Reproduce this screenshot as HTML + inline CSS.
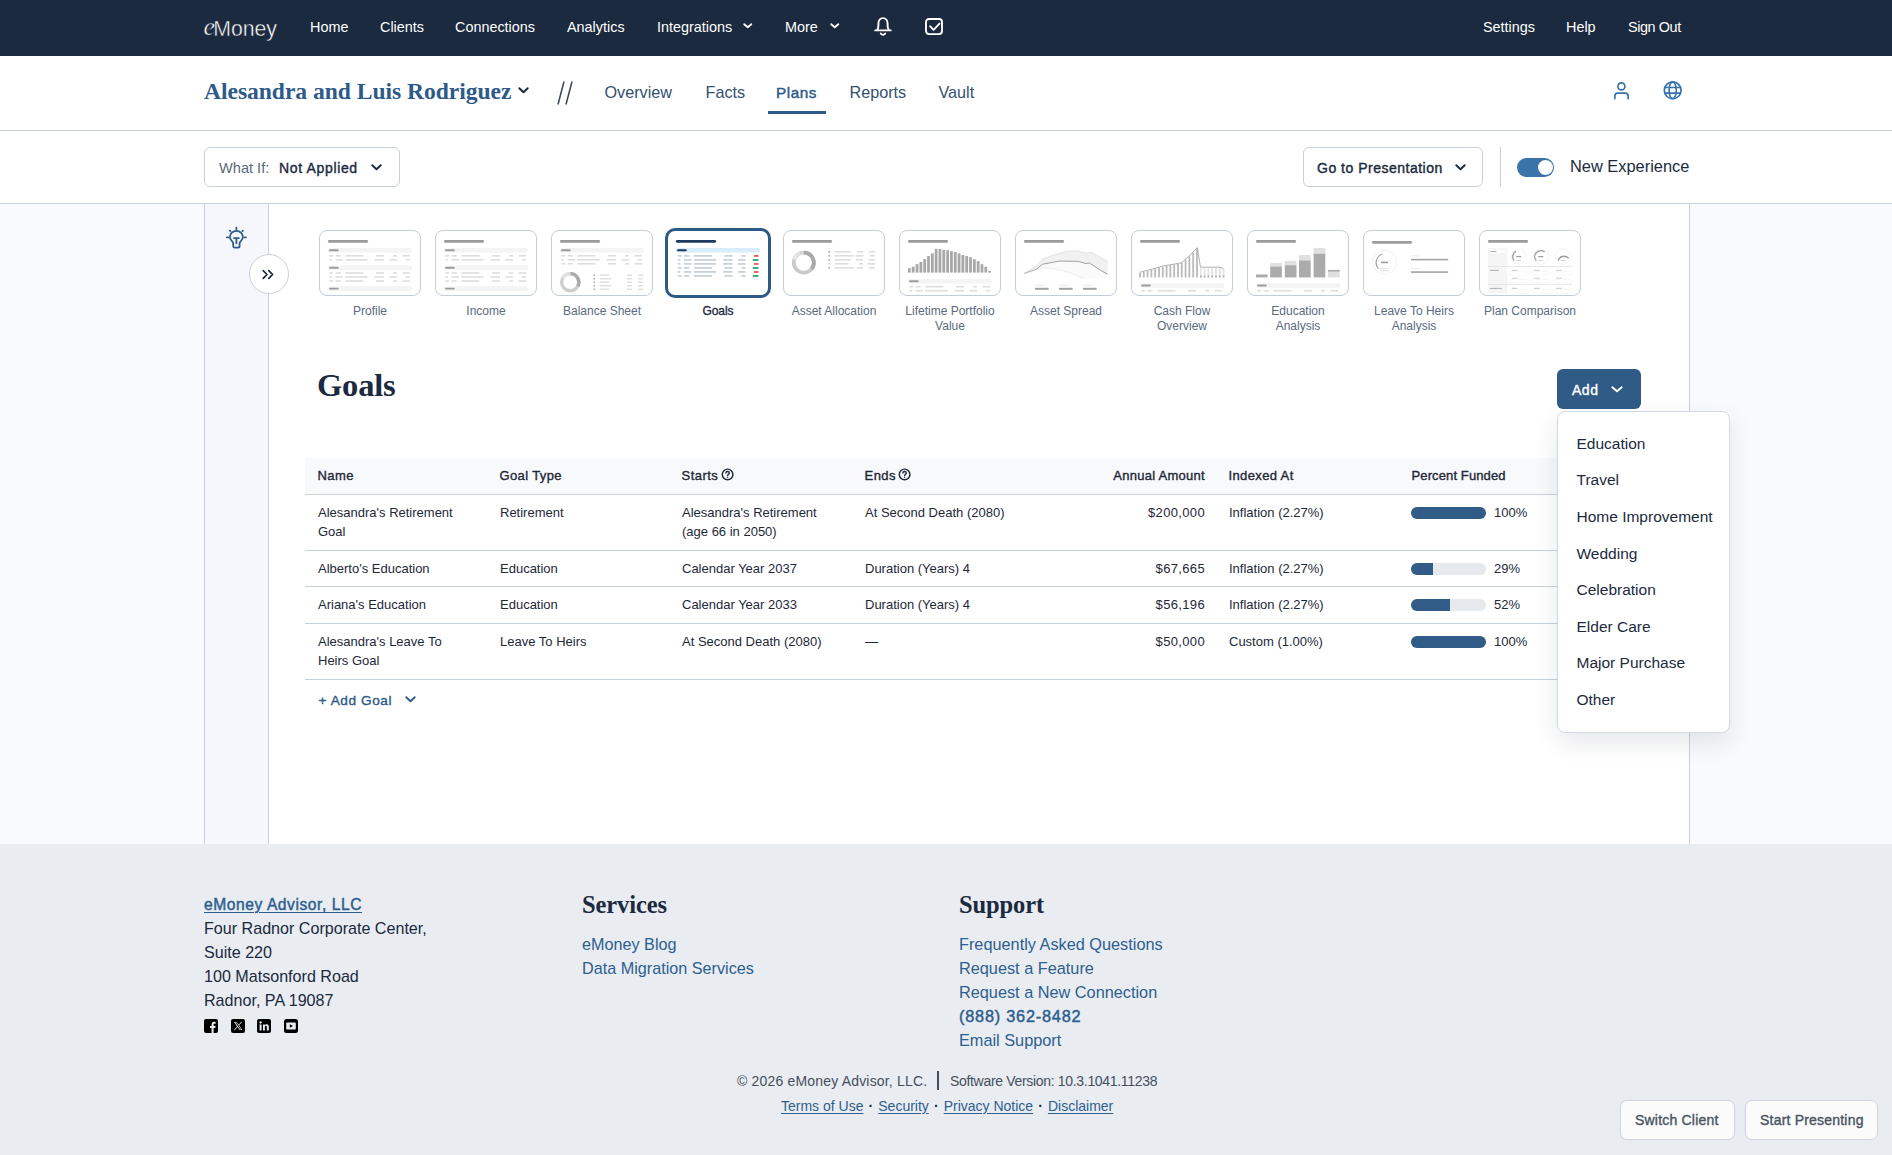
<!DOCTYPE html>
<html><head><meta charset="utf-8"><title>Goals</title>
<style>
html,body{margin:0;padding:0;}
body{width:1892px;height:1155px;position:relative;overflow:hidden;font-family:"Liberation Sans",sans-serif;background:#fff;}
.a{position:absolute;white-space:nowrap;box-sizing:content-box;}
svg.a{overflow:visible;}
u{text-decoration-thickness:1px;}
.d{display:inline-block;width:14.8px;text-align:center;color:#1b2a3e;}
</style></head><body>
<div class="a" style="left:0px;top:0px;width:1892px;height:56px;background:#1b2a3e"></div>
<div class="a" style="left:0px;top:56px;width:1892px;height:74px;background:#fff"></div>
<div class="a" style="left:0px;top:130px;width:1892px;height:1px;background:#c8d0dc"></div>
<div class="a" style="left:0px;top:131px;width:1892px;height:72px;background:#fff"></div>
<div class="a" style="left:0px;top:203px;width:1892px;height:1px;background:#c8d0dc"></div>
<div class="a" style="left:0px;top:204px;width:1892px;height:640px;background:#f9fafd"></div>
<div class="a" style="left:204px;top:204px;width:1px;height:640px;background:#c8d0dc"></div>
<div class="a" style="left:205px;top:204px;width:63px;height:640px;background:#f6f7fc"></div>
<div class="a" style="left:268px;top:204px;width:1px;height:640px;background:#c8d0dc"></div>
<div class="a" style="left:269px;top:204px;width:1420px;height:640px;background:#fff"></div>
<div class="a" style="left:1689px;top:204px;width:1px;height:640px;background:#c8d0dc"></div>
<div class="a" style="left:0px;top:844px;width:1892px;height:311px;background:#e9ecf1"></div>
<div class="a" style="left:203.5px;top:10.4px;font-family:'Liberation Serif',serif;font-style:italic;font-size:26px;line-height:34px;color:#fff;-webkit-text-stroke:0.5px #1b2a3e;">e</div>
<div class="a" style="left:213.3px;top:15.70px;font-size:21.3px;line-height:26px;color:#fff;letter-spacing:-0.05px;-webkit-text-stroke:0.45px #1b2a3e;">Money</div>
<div class="a" style="left:310px;top:17.50px;font-size:14.4px;line-height:19px;color:#fff;">Home</div>
<div class="a" style="left:380px;top:17.50px;font-size:14.4px;line-height:19px;color:#fff;">Clients</div>
<div class="a" style="left:455px;top:17.50px;font-size:14.4px;line-height:19px;color:#fff;">Connections</div>
<div class="a" style="left:567px;top:17.50px;font-size:14.4px;line-height:19px;color:#fff;">Analytics</div>
<div class="a" style="left:657px;top:17.50px;font-size:14.4px;line-height:19px;color:#fff;">Integrations</div>
<div class="a" style="left:785px;top:17.50px;font-size:14.4px;line-height:19px;color:#fff;">More</div>
<svg class="a" style="left:743px;top:23px" width="9.5" height="5.5" viewBox="0 0 9.5 5.5"><path d="M1.2 1.2 L4.75 4.3 L8.299999999999999 1.2" fill="none" stroke="#fff" stroke-width="1.8" stroke-linecap="round" stroke-linejoin="round"/></svg>
<svg class="a" style="left:830px;top:23px" width="9.5" height="5.5" viewBox="0 0 9.5 5.5"><path d="M1.2 1.2 L4.75 4.3 L8.299999999999999 1.2" fill="none" stroke="#fff" stroke-width="1.8" stroke-linecap="round" stroke-linejoin="round"/></svg>
<svg class="a" style="left:873px;top:16px" width="20" height="22" viewBox="0 0 20 22"><g fill="none" stroke="#fff" stroke-width="1.9" stroke-linecap="round" stroke-linejoin="round"><path d="M4.4 13.6c.7-1.1 1-2.5 1-3.9V7.7c0-3.2 2-5.6 4.6-5.6s4.6 2.4 4.6 5.6v2c0 1.4.3 2.8 1 3.9"/><path d="M2.2 14.4h15.6"/><path d="M7.8 17.6c.5.8 1.2 1.3 2.2 1.3s1.7-.5 2.2-1.3"/></g></svg>
<svg class="a" style="left:925px;top:18px" width="19" height="18" viewBox="0 0 19 18"><rect x="1" y="1" width="16" height="15.1" rx="3" fill="none" stroke="#fff" stroke-width="1.9"/><path d="M5.2 8.3l3.4 3.5l5.9-6.2" fill="none" stroke="#fff" stroke-width="1.9" stroke-linecap="round" stroke-linejoin="round"/></svg>
<div class="a" style="left:1483px;top:17.50px;font-size:14.4px;line-height:19px;color:#fff;">Settings</div>
<div class="a" style="left:1566px;top:17.50px;font-size:14.4px;line-height:19px;color:#fff;">Help</div>
<div class="a" style="left:1628px;top:17.50px;font-size:14.4px;line-height:19px;color:#fff;letter-spacing:-0.4px;">Sign Out</div>
<div class="a" style="left:204px;top:76.50px;font-size:23.6px;line-height:29px;color:#2d5a88;font-weight:700;font-family:'Liberation Serif', serif;letter-spacing:-0.05px;">Alesandra and Luis Rodriguez</div>
<svg class="a" style="left:518px;top:87px" width="11" height="6.5" viewBox="0 0 11 6.5"><path d="M1.3 1.3 L5.5 5.2 L9.7 1.3" fill="none" stroke="#1b2a3e" stroke-width="2" stroke-linecap="round" stroke-linejoin="round"/></svg>
<svg class="a" style="left:556px;top:80px" width="18" height="26" viewBox="0 0 18 26"><path d="M8 1.5L2 24.5M16 1.5L10 24.5" stroke="#3a4656" stroke-width="1.5" fill="none"/></svg>
<div class="a" style="left:604.5px;top:81.90px;font-size:16.2px;line-height:21px;color:#34506f;">Overview</div>
<div class="a" style="left:705.5px;top:81.90px;font-size:16.2px;line-height:21px;color:#34506f;">Facts</div>
<div class="a" style="left:776px;top:82.90px;font-size:15.3px;line-height:20px;color:#2d5a88;letter-spacing:0.551px;-webkit-text-stroke:0.43px #2d5a88;">Plans</div>
<div class="a" style="left:849.5px;top:81.90px;font-size:16.2px;line-height:21px;color:#34506f;">Reports</div>
<div class="a" style="left:938.5px;top:81.90px;font-size:16.2px;line-height:21px;color:#34506f;">Vault</div>
<div class="a" style="left:768px;top:111px;width:58px;height:3px;background:#2d5a88"></div>
<svg class="a" style="left:1611px;top:79px" width="22" height="22" viewBox="0 0 22 22"><circle cx="10.4" cy="7.4" r="3.5" fill="none" stroke="#3573ad" stroke-width="1.7"/><path d="M3.85 19.6v-2.6c0-1.6 1.3-2.95 2.95-2.95h7.4c1.6 0 2.95 1.3 2.95 2.95v2.6" fill="none" stroke="#3573ad" stroke-width="1.7" stroke-linecap="round"/></svg>
<svg class="a" style="left:1662px;top:80px" width="22" height="22" viewBox="0 0 22 22"><circle cx="10.7" cy="10.3" r="8.4" fill="none" stroke="#3573ad" stroke-width="1.7"/><ellipse cx="10.7" cy="10.3" rx="3.6" ry="8.4" fill="none" stroke="#3573ad" stroke-width="1.6"/><path d="M2.6 7.5h16.2M2.6 13.1h16.2" stroke="#3573ad" stroke-width="1.6"/></svg>
<div class="a" style="left:204px;top:147px;width:194px;height:38px;border:1px solid #c8d0dc;border-radius:6px;background:#fff"></div>
<div class="a" style="left:219px;top:158.90px;font-size:14.6px;line-height:19px;color:#5b6a7c;">What If:</div>
<div class="a" style="left:279px;top:158.70px;font-size:14px;line-height:18px;color:#1b2a3e;letter-spacing:0.654px;-webkit-text-stroke:0.39px #1b2a3e;">Not Applied</div>
<svg class="a" style="left:371px;top:164px" width="11" height="6.5" viewBox="0 0 11 6.5"><path d="M1.25 1.25 L5.5 5.25 L9.75 1.25" fill="none" stroke="#1b2a3e" stroke-width="1.9" stroke-linecap="round" stroke-linejoin="round"/></svg>
<div class="a" style="left:1303px;top:147px;width:178px;height:38px;border:1px solid #c8d0dc;border-radius:6px;background:#fff"></div>
<div class="a" style="left:1317px;top:158.50px;font-size:14px;line-height:18px;color:#1b2a3e;letter-spacing:0.504px;-webkit-text-stroke:0.39px #1b2a3e;">Go to Presentation</div>
<svg class="a" style="left:1455px;top:164px" width="11" height="6.5" viewBox="0 0 11 6.5"><path d="M1.25 1.25 L5.5 5.25 L9.75 1.25" fill="none" stroke="#1b2a3e" stroke-width="1.9" stroke-linecap="round" stroke-linejoin="round"/></svg>
<div class="a" style="left:1500px;top:147px;width:1px;height:40px;background:#c8d0dc"></div>
<div class="a" style="left:1517px;top:158px;width:37px;height:19px;background:#3a73a9;border-radius:10px"></div>
<div class="a" style="left:1538px;top:160px;width:15px;height:15px;background:#fff;border-radius:50%"></div>
<div class="a" style="left:1570px;top:155.60px;font-size:16.4px;line-height:21px;color:#1b2a3e;">New Experience</div>
<svg class="a" style="left:225px;top:226px" width="23" height="23" viewBox="0 0 23 23"><g stroke="#2d5a88" stroke-width="1.8" stroke-linecap="round" fill="none"><path d="M11.4 1.6v1.6M4.9 4.6l.5.5M17.9 4.6l-.5.5M1.9 11.3h1.3M19.6 11.3h1.3"/><path d="M8.2 17.2c0-1.8-3.3-2.6-3.3-6.1c0-3.6 2.9-6.3 6.5-6.3s6.5 2.7 6.5 6.3c0 3.5-3.3 4.3-3.3 6.1v2.8c0 .9-.7 1.6-1.6 1.6h-3.2c-.9 0-1.6-.7-1.6-1.6z"/><path d="M9 12.1h4.8M11.4 12.1v5.2"/></g></svg>
<div class="a" style="left:249px;top:254px;width:38px;height:38px;border:1px solid #c8d0dc;border-radius:50%;background:#fff"></div>
<svg class="a" style="left:261px;top:269px" width="14" height="11" viewBox="0 0 14 11"><path d="M2.2 1.6l3.8 3.9l-3.8 3.9M7.8 1.6l3.8 3.9l-3.8 3.9" fill="none" stroke="#1b2a3e" stroke-width="1.7" stroke-linecap="round" stroke-linejoin="round"/></svg>
<div class="a" style="left:319px;top:230px;width:100px;height:64px;border:1px solid #c3ccdb;border-radius:8px;background:#fff"></div>
<svg class="a" style="left:319px;top:230px" width="102" height="66" viewBox="0 0 102 66"><line x1="10.3" y1="11.3" x2="47.7" y2="11.3" stroke="#9b9b9b" stroke-width="2.7" stroke-linecap="round"/><rect x="9" y="18" width="84" height="4.6" rx="1.5" fill="#f4f4f4"/><line x1="11" y1="20.3" x2="18.8" y2="20.3" stroke="#9b9b9b" stroke-width="1.9" stroke-linecap="round"/><rect x="10.3" y="25.0" width="3.799999999999999" height="1.6" fill="#dedede"/><rect x="16.5" y="25.0" width="5.300000000000001" height="1.6" fill="#dedede"/><rect x="26.4" y="25.0" width="18.1" height="1.6" fill="#dedede"/><rect x="57" y="25.0" width="8" height="1.6" fill="#dedede"/><rect x="74" y="25.0" width="4" height="1.6" fill="#dedede"/><rect x="83.6" y="25.0" width="7.400000000000006" height="1.6" fill="#dedede"/><rect x="10.3" y="29.0" width="2.5" height="1.6" fill="#dedede"/><rect x="16.5" y="29.0" width="7.5" height="1.6" fill="#dedede"/><rect x="26.4" y="29.0" width="22.200000000000003" height="1.6" fill="#dedede"/><rect x="55.7" y="29.0" width="9.299999999999997" height="1.6" fill="#dedede"/><rect x="70.5" y="29.0" width="7.5" height="1.6" fill="#dedede"/><rect x="86.8" y="29.0" width="4.200000000000003" height="1.6" fill="#dedede"/><rect x="9" y="35.5" width="84" height="4.6" rx="1.5" fill="#f4f4f4"/><line x1="11" y1="37.8" x2="18.8" y2="37.8" stroke="#9b9b9b" stroke-width="1.9" stroke-linecap="round"/><rect x="10.3" y="42.2" width="3.799999999999999" height="1.6" fill="#dedede"/><rect x="16.5" y="42.2" width="5.300000000000001" height="1.6" fill="#dedede"/><rect x="26.4" y="42.2" width="18.1" height="1.6" fill="#dedede"/><rect x="57" y="42.2" width="8" height="1.6" fill="#dedede"/><rect x="74" y="42.2" width="4" height="1.6" fill="#dedede"/><rect x="83.6" y="42.2" width="7.400000000000006" height="1.6" fill="#dedede"/><rect x="10.3" y="46.2" width="2.5" height="1.6" fill="#dedede"/><rect x="16.5" y="46.2" width="7.5" height="1.6" fill="#dedede"/><rect x="26.4" y="46.2" width="22.200000000000003" height="1.6" fill="#dedede"/><rect x="55.7" y="46.2" width="9.299999999999997" height="1.6" fill="#dedede"/><rect x="70.5" y="46.2" width="7.5" height="1.6" fill="#dedede"/><rect x="86.8" y="46.2" width="4.200000000000003" height="1.6" fill="#dedede"/><rect x="10.3" y="50.2" width="3.799999999999999" height="1.6" fill="#dedede"/><rect x="16.5" y="50.2" width="5.300000000000001" height="1.6" fill="#dedede"/><rect x="26.4" y="50.2" width="18.1" height="1.6" fill="#dedede"/><rect x="57" y="50.2" width="8" height="1.6" fill="#dedede"/><rect x="74" y="50.2" width="4" height="1.6" fill="#dedede"/><rect x="83.6" y="50.2" width="7.400000000000006" height="1.6" fill="#dedede"/><rect x="9" y="56.3" width="84" height="4.6" rx="1.5" fill="#f4f4f4"/><line x1="11" y1="58.599999999999994" x2="18.8" y2="58.599999999999994" stroke="#9b9b9b" stroke-width="1.9" stroke-linecap="round"/></svg>
<div class="a" style="left:312.0px;width:116px;text-align:center;top:302.80px;font-size:12px;line-height:16px;color:#5a6a80;">Profile</div>
<div class="a" style="left:435px;top:230px;width:100px;height:64px;border:1px solid #c3ccdb;border-radius:8px;background:#fff"></div>
<svg class="a" style="left:435px;top:230px" width="102" height="66" viewBox="0 0 102 66"><line x1="10.3" y1="11.3" x2="47.7" y2="11.3" stroke="#9b9b9b" stroke-width="2.7" stroke-linecap="round"/><rect x="9" y="18" width="84" height="4.6" rx="1.5" fill="#f4f4f4"/><line x1="11" y1="20.3" x2="18.8" y2="20.3" stroke="#9b9b9b" stroke-width="1.9" stroke-linecap="round"/><rect x="10.3" y="25.0" width="3.799999999999999" height="1.6" fill="#dedede"/><rect x="16.5" y="25.0" width="5.300000000000001" height="1.6" fill="#dedede"/><rect x="26.4" y="25.0" width="18.1" height="1.6" fill="#dedede"/><rect x="57" y="25.0" width="8" height="1.6" fill="#dedede"/><rect x="74" y="25.0" width="4" height="1.6" fill="#dedede"/><rect x="83.6" y="25.0" width="7.400000000000006" height="1.6" fill="#dedede"/><rect x="10.3" y="29.0" width="2.5" height="1.6" fill="#dedede"/><rect x="16.5" y="29.0" width="7.5" height="1.6" fill="#dedede"/><rect x="26.4" y="29.0" width="22.200000000000003" height="1.6" fill="#dedede"/><rect x="55.7" y="29.0" width="9.299999999999997" height="1.6" fill="#dedede"/><rect x="70.5" y="29.0" width="7.5" height="1.6" fill="#dedede"/><rect x="86.8" y="29.0" width="4.200000000000003" height="1.6" fill="#dedede"/><rect x="9" y="35.5" width="84" height="4.6" rx="1.5" fill="#f4f4f4"/><line x1="11" y1="37.8" x2="18.8" y2="37.8" stroke="#9b9b9b" stroke-width="1.9" stroke-linecap="round"/><rect x="10.3" y="42.2" width="3.799999999999999" height="1.6" fill="#dedede"/><rect x="16.5" y="42.2" width="5.300000000000001" height="1.6" fill="#dedede"/><rect x="26.4" y="42.2" width="18.1" height="1.6" fill="#dedede"/><rect x="57" y="42.2" width="8" height="1.6" fill="#dedede"/><rect x="74" y="42.2" width="4" height="1.6" fill="#dedede"/><rect x="83.6" y="42.2" width="7.400000000000006" height="1.6" fill="#dedede"/><rect x="10.3" y="46.2" width="2.5" height="1.6" fill="#dedede"/><rect x="16.5" y="46.2" width="7.5" height="1.6" fill="#dedede"/><rect x="26.4" y="46.2" width="22.200000000000003" height="1.6" fill="#dedede"/><rect x="55.7" y="46.2" width="9.299999999999997" height="1.6" fill="#dedede"/><rect x="70.5" y="46.2" width="7.5" height="1.6" fill="#dedede"/><rect x="86.8" y="46.2" width="4.200000000000003" height="1.6" fill="#dedede"/><rect x="10.3" y="50.2" width="3.799999999999999" height="1.6" fill="#dedede"/><rect x="16.5" y="50.2" width="5.300000000000001" height="1.6" fill="#dedede"/><rect x="26.4" y="50.2" width="18.1" height="1.6" fill="#dedede"/><rect x="57" y="50.2" width="8" height="1.6" fill="#dedede"/><rect x="74" y="50.2" width="4" height="1.6" fill="#dedede"/><rect x="83.6" y="50.2" width="7.400000000000006" height="1.6" fill="#dedede"/><rect x="9" y="56.3" width="84" height="4.6" rx="1.5" fill="#f4f4f4"/><line x1="11" y1="58.599999999999994" x2="18.8" y2="58.599999999999994" stroke="#9b9b9b" stroke-width="1.9" stroke-linecap="round"/></svg>
<div class="a" style="left:428.0px;width:116px;text-align:center;top:302.80px;font-size:12px;line-height:16px;color:#5a6a80;">Income</div>
<div class="a" style="left:551px;top:230px;width:100px;height:64px;border:1px solid #c3ccdb;border-radius:8px;background:#fff"></div>
<svg class="a" style="left:551px;top:230px" width="102" height="66" viewBox="0 0 102 66"><line x1="10.3" y1="11.3" x2="47.7" y2="11.3" stroke="#9b9b9b" stroke-width="2.7" stroke-linecap="round"/><rect x="9" y="18" width="84" height="4.6" rx="1.5" fill="#f4f4f4"/><line x1="11" y1="20.3" x2="18.8" y2="20.3" stroke="#9b9b9b" stroke-width="1.9" stroke-linecap="round"/><rect x="10.3" y="25.0" width="3.799999999999999" height="1.6" fill="#dedede"/><rect x="16.5" y="25.0" width="5.300000000000001" height="1.6" fill="#dedede"/><rect x="26.4" y="25.0" width="18.1" height="1.6" fill="#dedede"/><rect x="57" y="25.0" width="8" height="1.6" fill="#dedede"/><rect x="74" y="25.0" width="4" height="1.6" fill="#dedede"/><rect x="83.6" y="25.0" width="7.400000000000006" height="1.6" fill="#dedede"/><rect x="10.3" y="29.0" width="2.5" height="1.6" fill="#dedede"/><rect x="16.5" y="29.0" width="7.5" height="1.6" fill="#dedede"/><rect x="26.4" y="29.0" width="22.200000000000003" height="1.6" fill="#dedede"/><rect x="55.7" y="29.0" width="9.299999999999997" height="1.6" fill="#dedede"/><rect x="70.5" y="29.0" width="7.5" height="1.6" fill="#dedede"/><rect x="86.8" y="29.0" width="4.200000000000003" height="1.6" fill="#dedede"/><rect x="10.3" y="33.0" width="3.799999999999999" height="1.6" fill="#dedede"/><rect x="16.5" y="33.0" width="5.300000000000001" height="1.6" fill="#dedede"/><rect x="26.4" y="33.0" width="18.1" height="1.6" fill="#dedede"/><rect x="57" y="33.0" width="8" height="1.6" fill="#dedede"/><rect x="74" y="33.0" width="4" height="1.6" fill="#dedede"/><rect x="83.6" y="33.0" width="7.400000000000006" height="1.6" fill="#dedede"/><circle cx="19.2" cy="52.2" r="8.6" fill="none" stroke="#cfcfcf" stroke-width="3.4"/><path d="M19.2 43.6 A8.6 8.6 0 0 1 26.7 56.4" fill="none" stroke="#ababab" stroke-width="3.4"/><path d="M11.4 48.6 A8.6 8.6 0 0 1 19.2 43.6" fill="none" stroke="#e2e2e2" stroke-width="3.4"/><rect x="42.5" y="44.400000000000006" width="1.6" height="1.6" fill="#aaa"/><rect x="48.7" y="44.5" width="9.6" height="1.4" fill="#dedede"/><rect x="76" y="44.5" width="5" height="1.4" fill="#dedede"/><rect x="87" y="44.5" width="5" height="1.4" fill="#dedede"/><rect x="42.5" y="47.900000000000006" width="1.6" height="1.6" fill="#aaa"/><rect x="48.7" y="48.0" width="11.6" height="1.4" fill="#dedede"/><rect x="76" y="48.0" width="5" height="1.4" fill="#dedede"/><rect x="87" y="48.0" width="5" height="1.4" fill="#dedede"/><rect x="42.5" y="51.400000000000006" width="1.6" height="1.6" fill="#aaa"/><rect x="48.7" y="51.5" width="9.6" height="1.4" fill="#dedede"/><rect x="76" y="51.5" width="5" height="1.4" fill="#dedede"/><rect x="87" y="51.5" width="5" height="1.4" fill="#dedede"/><rect x="42.5" y="54.900000000000006" width="1.6" height="1.6" fill="#aaa"/><rect x="48.7" y="55.0" width="11.6" height="1.4" fill="#dedede"/><rect x="76" y="55.0" width="5" height="1.4" fill="#dedede"/><rect x="87" y="55.0" width="5" height="1.4" fill="#dedede"/><rect x="42.5" y="58.5" width="1.6" height="1.6" fill="#aaa"/><rect x="48.7" y="58.599999999999994" width="9.6" height="1.4" fill="#dedede"/><rect x="76" y="58.599999999999994" width="5" height="1.4" fill="#dedede"/><rect x="87" y="58.599999999999994" width="5" height="1.4" fill="#dedede"/></svg>
<div class="a" style="left:544.0px;width:116px;text-align:center;top:302.80px;font-size:12px;line-height:16px;color:#5a6a80;">Balance Sheet</div>
<div class="a" style="left:665px;top:228px;width:100px;height:64px;border:3px solid #2c5a86;border-radius:10px;background:#fff"></div>
<svg class="a" style="left:667px;top:230px" width="102" height="66" viewBox="0 0 102 66"><line x1="10.3" y1="11.3" x2="47.7" y2="11.3" stroke="#1d3a5c" stroke-width="2.7" stroke-linecap="round"/><rect x="9" y="18" width="84" height="4.6" rx="1.5" fill="#d8ecfb"/><line x1="11" y1="20.3" x2="18.8" y2="20.3" stroke="#1d3a5c" stroke-width="1.9" stroke-linecap="round"/><rect x="10.8" y="25.099999999999998" width="3.799999999999999" height="1.6" fill="#c3ccd9"/><rect x="17.0" y="25.099999999999998" width="5.300000000000001" height="1.6" fill="#c3ccd9"/><rect x="26.9" y="25.099999999999998" width="18.1" height="1.6" fill="#c3ccd9"/><rect x="57.5" y="25.099999999999998" width="8" height="1.6" fill="#c3ccd9"/><rect x="74.5" y="25.099999999999998" width="4" height="1.6" fill="#c3ccd9"/><rect x="87.1" y="25.099999999999998" width="4.3" height="1.7" fill="#e5483a"/><rect x="10.8" y="29.099999999999998" width="2.5" height="1.6" fill="#c3ccd9"/><rect x="17.0" y="29.099999999999998" width="7.5" height="1.6" fill="#c3ccd9"/><rect x="26.9" y="29.099999999999998" width="22.200000000000003" height="1.6" fill="#c3ccd9"/><rect x="56.2" y="29.099999999999998" width="9.299999999999997" height="1.6" fill="#c3ccd9"/><rect x="71.0" y="29.099999999999998" width="7.5" height="1.6" fill="#c3ccd9"/><rect x="85.8" y="29.099999999999998" width="5.6" height="1.7" fill="#20a05a"/><rect x="10.8" y="33.1" width="2.5" height="1.6" fill="#c3ccd9"/><rect x="17.0" y="33.1" width="7.5" height="1.6" fill="#c3ccd9"/><rect x="26.9" y="33.1" width="22.200000000000003" height="1.6" fill="#c3ccd9"/><rect x="56.2" y="33.1" width="9.299999999999997" height="1.6" fill="#c3ccd9"/><rect x="71.0" y="33.1" width="7.5" height="1.6" fill="#c3ccd9"/><rect x="87.1" y="33.1" width="4.3" height="1.7" fill="#e5483a"/><rect x="10.8" y="37.1" width="3.799999999999999" height="1.6" fill="#c3ccd9"/><rect x="17.0" y="37.1" width="5.300000000000001" height="1.6" fill="#c3ccd9"/><rect x="26.9" y="37.1" width="18.1" height="1.6" fill="#c3ccd9"/><rect x="57.5" y="37.1" width="8" height="1.6" fill="#c3ccd9"/><rect x="74.5" y="37.1" width="4" height="1.6" fill="#c3ccd9"/><rect x="85.8" y="37.1" width="5.6" height="1.7" fill="#20a05a"/><rect x="10.8" y="41.1" width="2.5" height="1.6" fill="#c3ccd9"/><rect x="17.0" y="41.1" width="7.5" height="1.6" fill="#c3ccd9"/><rect x="26.9" y="41.1" width="22.200000000000003" height="1.6" fill="#c3ccd9"/><rect x="56.2" y="41.1" width="9.299999999999997" height="1.6" fill="#c3ccd9"/><rect x="71.0" y="41.1" width="7.5" height="1.6" fill="#c3ccd9"/><rect x="87.1" y="41.1" width="4.3" height="1.7" fill="#e5483a"/><rect x="10.8" y="45.1" width="3.799999999999999" height="1.6" fill="#c3ccd9"/><rect x="17.0" y="45.1" width="5.300000000000001" height="1.6" fill="#c3ccd9"/><rect x="26.9" y="45.1" width="18.1" height="1.6" fill="#c3ccd9"/><rect x="57.5" y="45.1" width="8" height="1.6" fill="#c3ccd9"/><rect x="74.5" y="45.1" width="4" height="1.6" fill="#c3ccd9"/><rect x="85.8" y="45.1" width="5.6" height="1.7" fill="#20a05a"/></svg>
<div class="a" style="left:660.0px;width:116px;text-align:center;top:302.80px;font-size:12px;line-height:16px;color:#1b2a3e;letter-spacing:-0.068px;-webkit-text-stroke:0.34px #1b2a3e;">Goals</div>
<div class="a" style="left:783px;top:230px;width:100px;height:64px;border:1px solid #c3ccdb;border-radius:8px;background:#fff"></div>
<svg class="a" style="left:783px;top:230px" width="102" height="66" viewBox="0 0 102 66"><line x1="10.3" y1="11.3" x2="47.7" y2="11.3" stroke="#9b9b9b" stroke-width="2.7" stroke-linecap="round"/><circle cx="20.8" cy="32.7" r="10" fill="none" stroke="#cacaca" stroke-width="3.8"/><path d="M20.8 22.7 A10 10 0 0 1 28.5 39.1" fill="none" stroke="#a9a9a9" stroke-width="3.8"/><path d="M11.3 29.6 A10 10 0 0 1 17.5 23.3" fill="none" stroke="#e4e4e4" stroke-width="3.8"/><path d="M17.5 23.3 A10 10 0 0 1 20.8 22.7" fill="none" stroke="#d6d6d6" stroke-width="3.8"/><rect x="45.4" y="21.0" width="1.6" height="1.6" fill="#999"/><rect x="51.6" y="21.0" width="16" height="1.6" fill="#dedede"/><rect x="74" y="21.0" width="6" height="1.6" fill="#dedede"/><rect x="85.5" y="21.0" width="6.7" height="1.6" fill="#dedede"/><rect x="45.4" y="25.0" width="1.6" height="1.6" fill="#aaa"/><rect x="51.6" y="25.0" width="19.2" height="1.6" fill="#dedede"/><rect x="72.5" y="25.0" width="8" height="1.6" fill="#dedede"/><rect x="86.5" y="25.0" width="5.7" height="1.6" fill="#dedede"/><rect x="45.4" y="29.0" width="1.6" height="1.6" fill="#aaa"/><rect x="51.6" y="29.0" width="16" height="1.6" fill="#dedede"/><rect x="73" y="29.0" width="7" height="1.6" fill="#dedede"/><rect x="85.5" y="29.0" width="6.7" height="1.6" fill="#dedede"/><rect x="45.4" y="33.0" width="1.6" height="1.6" fill="#ddd"/><rect x="51.6" y="33.0" width="14" height="1.6" fill="#dedede"/><rect x="76" y="33.0" width="4" height="1.6" fill="#dedede"/><rect x="84.5" y="33.0" width="7.7" height="1.6" fill="#dedede"/><rect x="45.4" y="37.0" width="1.6" height="1.6" fill="#aaa"/><rect x="51.6" y="37.0" width="19.2" height="1.6" fill="#dedede"/><rect x="74" y="37.0" width="6" height="1.6" fill="#dedede"/><rect x="85.5" y="37.0" width="6.7" height="1.6" fill="#dedede"/></svg>
<div class="a" style="left:776.0px;width:116px;text-align:center;top:302.80px;font-size:12px;line-height:16px;color:#5a6a80;">Asset Allocation</div>
<div class="a" style="left:899px;top:230px;width:100px;height:64px;border:1px solid #c3ccdb;border-radius:8px;background:#fff"></div>
<svg class="a" style="left:899px;top:230px" width="102" height="66" viewBox="0 0 102 66"><line x1="10.3" y1="11.3" x2="47.7" y2="11.3" stroke="#9b9b9b" stroke-width="2.7" stroke-linecap="round"/><rect x="9.0" y="38.116591928251125" width="2.8" height="4.483408071748876" fill="#a8a8a8"/><rect x="12.82" y="36.70723894939142" width="2.8" height="5.892761050608584" fill="#a8a8a8"/><rect x="16.64" y="34.14477898782832" width="2.8" height="8.455221012171684" fill="#a8a8a8"/><rect x="20.46" y="32.03074951953876" width="2.8" height="10.569250480461243" fill="#a8a8a8"/><rect x="24.28" y="29.019859064702114" width="2.8" height="13.580140935297887" fill="#a8a8a8"/><rect x="28.099999999999998" y="26.07303010890455" width="2.8" height="16.52696989109545" fill="#a8a8a8"/><rect x="31.919999999999998" y="23.382447149263292" width="2.8" height="19.21755285073671" fill="#a8a8a8"/><rect x="35.739999999999995" y="18.898142216527866" width="2.8" height="23.701857783472136" fill="#a8a8a8"/><rect x="39.56" y="18.898142216527866" width="2.8" height="23.701857783472136" fill="#a8a8a8"/><rect x="43.379999999999995" y="19.85906470211403" width="2.8" height="22.740935297885972" fill="#a8a8a8"/><rect x="47.199999999999996" y="20.17937219730942" width="2.8" height="22.420627802690582" fill="#a8a8a8"/><rect x="51.019999999999996" y="21.14029468289558" width="2.8" height="21.459705317104422" fill="#a8a8a8"/><rect x="54.839999999999996" y="21.973094170403588" width="2.8" height="20.626905829596414" fill="#a8a8a8"/><rect x="58.66" y="23.382447149263292" width="2.8" height="19.21755285073671" fill="#a8a8a8"/><rect x="62.48" y="24.983984625240232" width="2.8" height="17.61601537475977" fill="#a8a8a8"/><rect x="66.3" y="26.07303010890455" width="2.8" height="16.52696989109545" fill="#a8a8a8"/><rect x="70.12" y="27.226137091607946" width="2.8" height="15.373862908392056" fill="#a8a8a8"/><rect x="73.94" y="29.276105060858423" width="2.8" height="13.323894939141578" fill="#a8a8a8"/><rect x="77.75999999999999" y="31.069827033952595" width="2.8" height="11.530172966047406" fill="#a8a8a8"/><rect x="81.58" y="34.14477898782832" width="2.8" height="8.455221012171684" fill="#a8a8a8"/><rect x="85.39999999999999" y="36.70723894939142" width="2.8" height="5.892761050608584" fill="#a8a8a8"/><rect x="89.22" y="40.99935938500961" width="2.8" height="1.6006406149903896" fill="#a8a8a8"/><rect x="9" y="49" width="84" height="4.6" rx="1.5" fill="#f4f4f4"/><line x1="11" y1="51.3" x2="18.8" y2="51.3" stroke="#9b9b9b" stroke-width="1.9" stroke-linecap="round"/><rect x="10.3" y="55.900000000000006" width="3.799999999999999" height="1.6" fill="#dedede"/><rect x="16.5" y="55.900000000000006" width="5.300000000000001" height="1.6" fill="#dedede"/><rect x="26.4" y="55.900000000000006" width="18.1" height="1.6" fill="#dedede"/><rect x="57" y="55.900000000000006" width="8" height="1.6" fill="#dedede"/><rect x="74" y="55.900000000000006" width="4" height="1.6" fill="#dedede"/><rect x="83.6" y="55.900000000000006" width="7.400000000000006" height="1.6" fill="#dedede"/><rect x="10.3" y="59.900000000000006" width="2.5" height="1.6" fill="#dedede"/><rect x="16.5" y="59.900000000000006" width="7.5" height="1.6" fill="#dedede"/><rect x="26.4" y="59.900000000000006" width="22.200000000000003" height="1.6" fill="#dedede"/><rect x="55.7" y="59.900000000000006" width="9.299999999999997" height="1.6" fill="#dedede"/><rect x="70.5" y="59.900000000000006" width="7.5" height="1.6" fill="#dedede"/><rect x="86.8" y="59.900000000000006" width="4.200000000000003" height="1.6" fill="#dedede"/></svg>
<div class="a" style="left:892.0px;width:116px;text-align:center;top:302.80px;font-size:12px;line-height:16px;color:#5a6a80;">Lifetime Portfolio</div>
<div class="a" style="left:892.0px;width:116px;text-align:center;top:317.80px;font-size:12px;line-height:16px;color:#5a6a80;">Value</div>
<div class="a" style="left:1015px;top:230px;width:100px;height:64px;border:1px solid #c3ccdb;border-radius:8px;background:#fff"></div>
<svg class="a" style="left:1015px;top:230px" width="102" height="66" viewBox="0 0 102 66"><line x1="10.3" y1="11.3" x2="47.7" y2="11.3" stroke="#9b9b9b" stroke-width="2.7" stroke-linecap="round"/><polygon points="8.97,43.56 27.55,38.12 37.80,38.44 54.45,42.60 69.19,48.37 92.57,48.37 92.57,44.20 85.20,40.04 74.31,32.99 71.11,33.63 63.42,31.39 44.20,31.07 37.80,32.35 27.55,34.27 21.14,39.40 8.97,43.56" fill="#fafafa"/><polygon points="8.97,43.56 21.14,36.19 27.55,29.15 37.80,25.30 46.76,22.74 51.89,21.14 63.42,21.14 72.39,23.38 76.23,22.10 85.20,27.23 92.57,31.39 92.57,44.20 85.20,40.04 74.31,32.99 71.11,33.63 63.42,31.39 44.20,31.07 37.80,32.35 27.55,34.27 21.14,39.40 8.97,43.56" fill="#f1f1f1"/><polyline points="8.97,43.56 21.14,36.19 27.55,29.15 37.80,25.30 46.76,22.74 51.89,21.14 63.42,21.14 72.39,23.38 76.23,22.10 85.20,27.23 92.57,31.39" fill="none" stroke="#d4d4d4" stroke-width="0.6"/><polyline points="8.97,43.56 21.14,39.40 27.55,34.27 37.80,32.35 44.20,31.07 63.42,31.39 71.11,33.63 74.31,32.99 85.20,40.04 92.57,44.20" fill="none" stroke="#8a8a8a" stroke-width="0.8"/><polyline points="8.97,43.56 27.55,38.12 37.80,38.44 54.45,42.60 69.19,48.37" fill="none" stroke="#e0e0e0" stroke-width="0.6"/><rect x="19.9" y="54.9" width="9.6" height="0.8" fill="#e2e2e2"/><rect x="19.9" y="57.8" width="13.8" height="2" fill="#a3a3a3"/><rect x="43.9" y="54.9" width="9.6" height="0.8" fill="#e2e2e2"/><rect x="43.9" y="57.8" width="13.8" height="2" fill="#a3a3a3"/><rect x="67.9" y="54.9" width="9.6" height="0.8" fill="#e2e2e2"/><rect x="67.9" y="57.8" width="13.8" height="2" fill="#a3a3a3"/></svg>
<div class="a" style="left:1008.0px;width:116px;text-align:center;top:302.80px;font-size:12px;line-height:16px;color:#5a6a80;">Asset Spread</div>
<div class="a" style="left:1131px;top:230px;width:100px;height:64px;border:1px solid #c3ccdb;border-radius:8px;background:#fff"></div>
<svg class="a" style="left:1131px;top:230px" width="102" height="66" viewBox="0 0 102 66"><line x1="10.3" y1="11.3" x2="47.7" y2="11.3" stroke="#9b9b9b" stroke-width="2.7" stroke-linecap="round"/><rect x="8.07" y="42.78" width="1.8" height="4.62" fill="#bababa"/><rect x="11.87" y="41.78" width="1.8" height="5.62" fill="#bababa"/><rect x="15.67" y="40.78" width="1.8" height="6.62" fill="#bababa"/><rect x="19.47" y="39.78" width="1.8" height="7.62" fill="#bababa"/><rect x="23.27" y="38.74" width="1.8" height="8.66" fill="#bababa"/><rect x="27.07" y="37.68" width="1.8" height="9.72" fill="#bababa"/><rect x="30.87" y="36.63" width="1.8" height="10.77" fill="#bababa"/><rect x="34.67" y="35.89" width="1.8" height="11.51" fill="#bababa"/><rect x="38.47" y="35.26" width="1.8" height="12.14" fill="#bababa"/><rect x="42.27" y="34.62" width="1.8" height="12.78" fill="#bababa"/><rect x="46.07" y="33.99" width="1.8" height="13.41" fill="#bababa"/><rect x="49.87" y="32.81" width="1.8" height="14.59" fill="#bababa"/><rect x="53.67" y="29.60" width="1.8" height="17.80" fill="#bababa"/><rect x="57.47" y="26.37" width="1.8" height="21.03" fill="#bababa"/><rect x="61.27" y="22.42" width="1.8" height="24.98" fill="#bababa"/><rect x="65.07" y="18.47" width="1.8" height="28.93" fill="#bababa"/><rect x="68.87" y="37.66" width="1.8" height="9.74" fill="#e3e3e3"/><rect x="68.97" y="45.6" width="1.6" height="1.8" fill="#aaa"/><rect x="72.67" y="37.66" width="1.8" height="9.74" fill="#e3e3e3"/><rect x="72.77" y="45.6" width="1.6" height="1.8" fill="#aaa"/><rect x="76.47" y="37.66" width="1.8" height="9.74" fill="#e3e3e3"/><rect x="76.57" y="45.6" width="1.6" height="1.8" fill="#aaa"/><rect x="80.27" y="37.66" width="1.8" height="9.74" fill="#e3e3e3"/><rect x="80.37" y="45.6" width="1.6" height="1.8" fill="#aaa"/><rect x="84.07" y="37.66" width="1.8" height="9.74" fill="#e3e3e3"/><rect x="84.17" y="45.6" width="1.6" height="1.8" fill="#aaa"/><rect x="87.87" y="37.92" width="1.8" height="9.48" fill="#e3e3e3"/><rect x="87.97" y="45.6" width="1.6" height="1.8" fill="#aaa"/><rect x="91.67" y="38.94" width="1.8" height="8.46" fill="#e3e3e3"/><rect x="91.77" y="45.6" width="1.6" height="1.8" fill="#aaa"/><polyline points="8.97,42.28 21.14,39.08 32.67,35.87 49.97,32.99 58.30,25.94 66.30,17.62 69.51,37.16 87.76,37.16 92.57,38.44" fill="none" stroke="#9d9d9d" stroke-width="0.8"/><rect x="9" y="53.2" width="84" height="4.6" rx="1.5" fill="#f4f4f4"/><line x1="11" y1="55.5" x2="18.8" y2="55.5" stroke="#9b9b9b" stroke-width="1.9" stroke-linecap="round"/><rect x="10.3" y="59.900000000000006" width="3.799999999999999" height="1.6" fill="#dedede"/><rect x="16.5" y="59.900000000000006" width="5.300000000000001" height="1.6" fill="#dedede"/><rect x="26.4" y="59.900000000000006" width="18.1" height="1.6" fill="#dedede"/><rect x="57" y="59.900000000000006" width="8" height="1.6" fill="#dedede"/><rect x="74" y="59.900000000000006" width="4" height="1.6" fill="#dedede"/><rect x="83.6" y="59.900000000000006" width="7.400000000000006" height="1.6" fill="#dedede"/></svg>
<div class="a" style="left:1124.0px;width:116px;text-align:center;top:302.80px;font-size:12px;line-height:16px;color:#5a6a80;">Cash Flow</div>
<div class="a" style="left:1124.0px;width:116px;text-align:center;top:317.80px;font-size:12px;line-height:16px;color:#5a6a80;">Overview</div>
<div class="a" style="left:1247px;top:230px;width:100px;height:64px;border:1px solid #c3ccdb;border-radius:8px;background:#fff"></div>
<svg class="a" style="left:1247px;top:230px" width="102" height="66" viewBox="0 0 102 66"><line x1="10.3" y1="11.3" x2="47.7" y2="11.3" stroke="#9b9b9b" stroke-width="2.7" stroke-linecap="round"/><rect x="9" y="44.5" width="11.600000000000001" height="2.8999999999999986" fill="#ababab"/><rect x="23.2" y="32.9" width="11.7" height="3.6000000000000014" fill="#e0e0e0"/><rect x="23.2" y="36.5" width="11.7" height="10.899999999999999" fill="#ababab"/><rect x="37.8" y="30.9" width="11.700000000000003" height="4.300000000000004" fill="#e0e0e0"/><rect x="37.8" y="35.2" width="11.700000000000003" height="12.199999999999996" fill="#ababab"/><rect x="52" y="25" width="11.700000000000003" height="5.399999999999999" fill="#e0e0e0"/><rect x="52" y="30.4" width="11.700000000000003" height="17.0" fill="#ababab"/><rect x="66.6" y="17.9" width="11.700000000000003" height="5.800000000000001" fill="#e0e0e0"/><rect x="66.6" y="23.7" width="11.700000000000003" height="23.7" fill="#ababab"/><rect x="80.9" y="39.9" width="11.8" height="1.9" fill="#ababab"/><rect x="80.9" y="41.8" width="11.8" height="5.6" fill="#e0e0e0"/><rect x="9" y="53.2" width="84" height="4.6" rx="1.5" fill="#f4f4f4"/><line x1="11" y1="55.5" x2="18.8" y2="55.5" stroke="#9b9b9b" stroke-width="1.9" stroke-linecap="round"/><rect x="10.3" y="59.900000000000006" width="3.799999999999999" height="1.6" fill="#dedede"/><rect x="16.5" y="59.900000000000006" width="5.300000000000001" height="1.6" fill="#dedede"/><rect x="26.4" y="59.900000000000006" width="18.1" height="1.6" fill="#dedede"/><rect x="57" y="59.900000000000006" width="8" height="1.6" fill="#dedede"/><rect x="74" y="59.900000000000006" width="4" height="1.6" fill="#dedede"/><rect x="83.6" y="59.900000000000006" width="7.400000000000006" height="1.6" fill="#dedede"/></svg>
<div class="a" style="left:1240.0px;width:116px;text-align:center;top:302.80px;font-size:12px;line-height:16px;color:#5a6a80;">Education</div>
<div class="a" style="left:1240.0px;width:116px;text-align:center;top:317.80px;font-size:12px;line-height:16px;color:#5a6a80;">Analysis</div>
<div class="a" style="left:1363px;top:230px;width:100px;height:64px;border:1px solid #c3ccdb;border-radius:8px;background:#fff"></div>
<svg class="a" style="left:1363px;top:230px" width="102" height="66" viewBox="0 0 102 66"><line x1="10.3" y1="12.3" x2="47.7" y2="12.3" stroke="#9b9b9b" stroke-width="2.7" stroke-linecap="round"/><circle cx="21.5" cy="32.4" r="12" fill="none" stroke="#efefef" stroke-width="0.8"/><path d="M15.3 38.5 A9 9 0 0 1 19.5 24" fill="none" stroke="#a0a0a0" stroke-width="1.2"/><rect x="17.9" y="31.7" width="7" height="1.5" fill="#999"/><rect x="16.3" y="37.8" width="10.3" height="0.8" fill="#ddd"/><rect x="17.3" y="39.9" width="8.3" height="1.5" fill="#e5e5e5"/><rect x="48" y="25.5" width="9.3" height="0.8" fill="#e4e4e4"/><rect x="48" y="28.8" width="37.2" height="1.6" fill="#a3a3a3"/><rect x="48" y="38" width="9.3" height="0.8" fill="#e4e4e4"/><rect x="48" y="41.3" width="37.2" height="1.6" fill="#a3a3a3"/></svg>
<div class="a" style="left:1356.0px;width:116px;text-align:center;top:302.80px;font-size:12px;line-height:16px;color:#5a6a80;">Leave To Heirs</div>
<div class="a" style="left:1356.0px;width:116px;text-align:center;top:317.80px;font-size:12px;line-height:16px;color:#5a6a80;">Analysis</div>
<div class="a" style="left:1479px;top:230px;width:100px;height:64px;border:1px solid #c3ccdb;border-radius:8px;background:#fff"></div>
<svg class="a" style="left:1479px;top:230px" width="102" height="66" viewBox="0 0 102 66"><line x1="10.3" y1="11.3" x2="47.7" y2="11.3" stroke="#9b9b9b" stroke-width="2.7" stroke-linecap="round"/><rect x="9" y="17.9" width="19.5" height="45.5" fill="#f5f5f5"/><rect x="10.5" y="20.2" width="16" height="2.5" rx="1.2" fill="#fff"/><rect x="11.5" y="21.1" width="6" height="0.8" fill="#999"/><rect x="9" y="36" width="84" height="0.6" fill="#d8d8d8"/><rect x="9" y="54.1" width="84" height="0.6" fill="#d8d8d8"/><rect x="10.8" y="39.9" width="9" height="0.8" fill="#999"/><rect x="10.8" y="57.9" width="12" height="0.8" fill="#999"/><circle cx="39.7" cy="26.6" r="7.6" fill="none" stroke="#eeeeee" stroke-width="0.7"/><path d="M35.2 30.6 A6 6 0 0 1 37.2 21.2" fill="none" stroke="#a0a0a0" stroke-width="1.4"/><rect x="37.2" y="26" width="5" height="1.2" fill="#a0a0a0"/><rect x="37.2" y="30" width="5" height="0.6" fill="#bbb"/><rect x="32.900000000000006" y="39.9" width="5.6" height="0.7" fill="#aaa"/><rect x="30.400000000000002" y="41.3" width="18.6" height="3.8" rx="1.5" fill="none" stroke="#f0f0f0" stroke-width="0.6"/><rect x="32.900000000000006" y="47.8" width="5.6" height="0.7" fill="#aaa"/><rect x="30.400000000000002" y="49.199999999999996" width="18.6" height="3.8" rx="1.5" fill="none" stroke="#f0f0f0" stroke-width="0.6"/><rect x="32.900000000000006" y="57.9" width="5.6" height="0.7" fill="#aaa"/><rect x="30.400000000000002" y="59.3" width="18.6" height="3.8" rx="1.5" fill="none" stroke="#f0f0f0" stroke-width="0.6"/><circle cx="61.8" cy="26.6" r="7.6" fill="none" stroke="#eeeeee" stroke-width="0.7"/><path d="M57.3 30.6 A6 6 0 0 1 65.6 22" fill="none" stroke="#a0a0a0" stroke-width="1.4"/><rect x="59.3" y="26" width="5" height="1.2" fill="#a0a0a0"/><rect x="59.3" y="30" width="5" height="0.6" fill="#bbb"/><rect x="55.0" y="39.9" width="5.6" height="0.7" fill="#aaa"/><rect x="52.5" y="41.3" width="18.6" height="3.8" rx="1.5" fill="none" stroke="#f0f0f0" stroke-width="0.6"/><rect x="55.0" y="47.8" width="5.6" height="0.7" fill="#aaa"/><rect x="52.5" y="49.199999999999996" width="18.6" height="3.8" rx="1.5" fill="none" stroke="#f0f0f0" stroke-width="0.6"/><rect x="55.0" y="57.9" width="5.6" height="0.7" fill="#aaa"/><rect x="52.5" y="59.3" width="18.6" height="3.8" rx="1.5" fill="none" stroke="#f0f0f0" stroke-width="0.6"/><circle cx="83.8" cy="26.6" r="7.6" fill="none" stroke="#eeeeee" stroke-width="0.7"/><path d="M79.3 30.6 A6 6 0 0 1 89.6 28.3" fill="none" stroke="#a0a0a0" stroke-width="1.4"/><rect x="81.3" y="26" width="5" height="1.2" fill="#a0a0a0"/><rect x="81.3" y="30" width="5" height="0.6" fill="#bbb"/><rect x="77.0" y="39.9" width="5.6" height="0.7" fill="#aaa"/><rect x="74.5" y="41.3" width="18.6" height="3.8" rx="1.5" fill="none" stroke="#f0f0f0" stroke-width="0.6"/><rect x="77.0" y="47.8" width="5.6" height="0.7" fill="#aaa"/><rect x="74.5" y="49.199999999999996" width="18.6" height="3.8" rx="1.5" fill="none" stroke="#f0f0f0" stroke-width="0.6"/><rect x="77.0" y="57.9" width="5.6" height="0.7" fill="#aaa"/><rect x="74.5" y="59.3" width="18.6" height="3.8" rx="1.5" fill="none" stroke="#f0f0f0" stroke-width="0.6"/></svg>
<div class="a" style="left:1472.0px;width:116px;text-align:center;top:302.80px;font-size:12px;line-height:16px;color:#5a6a80;">Plan Comparison</div>
<div class="a" style="left:317px;top:365.80px;font-size:32.5px;line-height:38px;color:#1b2a3e;font-weight:700;font-family:'Liberation Serif', serif;letter-spacing:-0.2px;">Goals</div>
<div class="a" style="left:1557px;top:369px;width:84px;height:40px;background:#2f5b86;border-radius:6px"></div>
<div class="a" style="left:1572px;top:380.90px;font-size:14px;line-height:18px;color:#fff;letter-spacing:0.504px;-webkit-text-stroke:0.39px #fff;">Add</div>
<svg class="a" style="left:1611px;top:386px" width="12" height="6.5" viewBox="0 0 12 6.5"><path d="M1.3 1.3 L6.0 5.2 L10.7 1.3" fill="none" stroke="#fff" stroke-width="2" stroke-linecap="round" stroke-linejoin="round"/></svg>
<div class="a" style="left:305px;top:458px;width:1336px;height:36px;background:#f8f9fb"></div>
<div class="a" style="left:305px;top:494px;width:1336px;height:1px;background:#c8d0dc"></div>
<div class="a" style="left:317.5px;top:467.10px;font-size:13px;line-height:17px;color:#1d2838;letter-spacing:0.468px;-webkit-text-stroke:0.36px #1d2838;">Name</div>
<div class="a" style="left:499.5px;top:467.10px;font-size:13px;line-height:17px;color:#1d2838;letter-spacing:0.368px;-webkit-text-stroke:0.36px #1d2838;">Goal Type</div>
<div class="a" style="left:681.5px;top:467.10px;font-size:13px;line-height:17px;color:#1d2838;letter-spacing:0.468px;-webkit-text-stroke:0.36px #1d2838;">Starts</div>
<div class="a" style="left:864.5px;top:467.10px;font-size:13px;line-height:17px;color:#1d2838;letter-spacing:0.468px;-webkit-text-stroke:0.36px #1d2838;">Ends</div>
<div class="a" style="right:687px;top:467.10px;font-size:13px;line-height:17px;color:#1d2838;text-align:right;letter-spacing:0.268px;-webkit-text-stroke:0.36px #1d2838;">Annual Amount</div>
<div class="a" style="left:1228.5px;top:467.10px;font-size:13px;line-height:17px;color:#1d2838;letter-spacing:0.368px;-webkit-text-stroke:0.36px #1d2838;">Indexed At</div>
<div class="a" style="left:1411.5px;top:467.10px;font-size:13px;line-height:17px;color:#1d2838;letter-spacing:0.118px;-webkit-text-stroke:0.36px #1d2838;">Percent Funded</div>
<svg class="a" style="left:721px;top:468px" width="13" height="13" viewBox="0 0 13 13"><circle cx="6.6" cy="6.4" r="5.3" fill="none" stroke="#1d2838" stroke-width="1.45"/><path d="M4.9 5.1c0-.9.7-1.6 1.7-1.6s1.7.6 1.7 1.5c0 1.2-1.6 1.2-1.6 2.4" fill="none" stroke="#1d2838" stroke-width="1.4" stroke-linecap="round"/><circle cx="6.6" cy="9.3" r=".75" fill="#1d2838"/></svg>
<svg class="a" style="left:898px;top:468px" width="13" height="13" viewBox="0 0 13 13"><circle cx="6.6" cy="6.4" r="5.3" fill="none" stroke="#1d2838" stroke-width="1.45"/><path d="M4.9 5.1c0-.9.7-1.6 1.7-1.6s1.7.6 1.7 1.5c0 1.2-1.6 1.2-1.6 2.4" fill="none" stroke="#1d2838" stroke-width="1.4" stroke-linecap="round"/><circle cx="6.6" cy="9.3" r=".75" fill="#1d2838"/></svg>
<div class="a" style="left:318.0px;top:503.70px;font-size:13px;line-height:17px;color:#1d2838;">Alesandra's Retirement</div>
<div class="a" style="left:318.0px;top:522.70px;font-size:13px;line-height:17px;color:#1d2838;">Goal</div>
<div class="a" style="left:500.0px;top:503.70px;font-size:13px;line-height:17px;color:#1d2838;">Retirement</div>
<div class="a" style="left:682.0px;top:503.70px;font-size:13px;line-height:17px;color:#1d2838;">Alesandra's Retirement</div>
<div class="a" style="left:682.0px;top:522.70px;font-size:13px;line-height:17px;color:#1d2838;">(age 66 in 2050)</div>
<div class="a" style="left:865.0px;top:503.70px;font-size:13px;line-height:17px;color:#1d2838;">At Second Death (2080)</div>
<div class="a" style="right:687px;top:503.70px;font-size:13px;line-height:17px;color:#1d2838;text-align:right;letter-spacing:0.35px;">$200,000</div>
<div class="a" style="left:1229.0px;top:503.70px;font-size:13px;line-height:17px;color:#1d2838;">Inflation (2.27%)</div>
<div class="a" style="left:1411px;top:507px;width:75px;height:12px;background:#e6e9ee;border-radius:6px"></div>
<div class="a" style="left:1411px;top:507px;width:75px;height:12px;background:#305c87;border-radius:6px"></div>
<div class="a" style="left:1494px;top:503.70px;font-size:13px;line-height:17px;color:#1d2838;">100%</div>
<div class="a" style="left:305px;top:550px;width:1336px;height:1px;background:#c8d0dc"></div>
<div class="a" style="left:318.0px;top:559.70px;font-size:13px;line-height:17px;color:#1d2838;">Alberto's Education</div>
<div class="a" style="left:500.0px;top:559.70px;font-size:13px;line-height:17px;color:#1d2838;">Education</div>
<div class="a" style="left:682.0px;top:559.70px;font-size:13px;line-height:17px;color:#1d2838;">Calendar Year 2037</div>
<div class="a" style="left:865.0px;top:559.70px;font-size:13px;line-height:17px;color:#1d2838;">Duration (Years) 4</div>
<div class="a" style="right:687px;top:559.70px;font-size:13px;line-height:17px;color:#1d2838;text-align:right;letter-spacing:0.35px;">$67,665</div>
<div class="a" style="left:1229.0px;top:559.70px;font-size:13px;line-height:17px;color:#1d2838;">Inflation (2.27%)</div>
<div class="a" style="left:1411px;top:563px;width:75px;height:12px;background:#e6e9ee;border-radius:6px"></div>
<div class="a" style="left:1411px;top:563px;width:22px;height:12px;background:#305c87;border-radius:6px 0 0 6px"></div>
<div class="a" style="left:1494px;top:559.70px;font-size:13px;line-height:17px;color:#1d2838;">29%</div>
<div class="a" style="left:305px;top:586px;width:1336px;height:1px;background:#c8d0dc"></div>
<div class="a" style="left:318.0px;top:595.70px;font-size:13px;line-height:17px;color:#1d2838;">Ariana's Education</div>
<div class="a" style="left:500.0px;top:595.70px;font-size:13px;line-height:17px;color:#1d2838;">Education</div>
<div class="a" style="left:682.0px;top:595.70px;font-size:13px;line-height:17px;color:#1d2838;">Calendar Year 2033</div>
<div class="a" style="left:865.0px;top:595.70px;font-size:13px;line-height:17px;color:#1d2838;">Duration (Years) 4</div>
<div class="a" style="right:687px;top:595.70px;font-size:13px;line-height:17px;color:#1d2838;text-align:right;letter-spacing:0.35px;">$56,196</div>
<div class="a" style="left:1229.0px;top:595.70px;font-size:13px;line-height:17px;color:#1d2838;">Inflation (2.27%)</div>
<div class="a" style="left:1411px;top:599px;width:75px;height:12px;background:#e6e9ee;border-radius:6px"></div>
<div class="a" style="left:1411px;top:599px;width:39px;height:12px;background:#305c87;border-radius:6px 0 0 6px"></div>
<div class="a" style="left:1494px;top:595.70px;font-size:13px;line-height:17px;color:#1d2838;">52%</div>
<div class="a" style="left:305px;top:623px;width:1336px;height:1px;background:#c8d0dc"></div>
<div class="a" style="left:318.0px;top:632.70px;font-size:13px;line-height:17px;color:#1d2838;">Alesandra's Leave To</div>
<div class="a" style="left:318.0px;top:651.70px;font-size:13px;line-height:17px;color:#1d2838;">Heirs Goal</div>
<div class="a" style="left:500.0px;top:632.70px;font-size:13px;line-height:17px;color:#1d2838;">Leave To Heirs</div>
<div class="a" style="left:682.0px;top:632.70px;font-size:13px;line-height:17px;color:#1d2838;">At Second Death (2080)</div>
<div class="a" style="left:865.0px;top:632.70px;font-size:13px;line-height:17px;color:#1d2838;">&mdash;</div>
<div class="a" style="right:687px;top:632.70px;font-size:13px;line-height:17px;color:#1d2838;text-align:right;letter-spacing:0.35px;">$50,000</div>
<div class="a" style="left:1229.0px;top:632.70px;font-size:13px;line-height:17px;color:#1d2838;">Custom (1.00%)</div>
<div class="a" style="left:1411px;top:636px;width:75px;height:12px;background:#e6e9ee;border-radius:6px"></div>
<div class="a" style="left:1411px;top:636px;width:75px;height:12px;background:#305c87;border-radius:6px"></div>
<div class="a" style="left:1494px;top:632.70px;font-size:13px;line-height:17px;color:#1d2838;">100%</div>
<div class="a" style="left:305px;top:679px;width:1336px;height:1px;background:#c8d0dc"></div>
<div class="a" style="left:318.5px;top:691.60px;font-size:13.6px;line-height:18px;color:#2d5a88;letter-spacing:0.59px;-webkit-text-stroke:0.38px #2d5a88;">+ Add Goal</div>
<svg class="a" style="left:405px;top:696px" width="11" height="6.5" viewBox="0 0 11 6.5"><path d="M1.25 1.25 L5.5 5.25 L9.75 1.25" fill="none" stroke="#2d5a88" stroke-width="1.9" stroke-linecap="round" stroke-linejoin="round"/></svg>
<div class="a" style="left:1557px;top:411px;width:171px;height:320px;border:1px solid #d3d9e3;border-radius:8px;background:#fff;box-shadow:0 10px 24px rgba(20,30,50,0.10)"></div>
<div class="a" style="left:1576.5px;top:433.80px;font-size:15.5px;line-height:20px;color:#1b2a3e;">Education</div>
<div class="a" style="left:1576.5px;top:470.40px;font-size:15.5px;line-height:20px;color:#1b2a3e;">Travel</div>
<div class="a" style="left:1576.5px;top:507.00px;font-size:15.5px;line-height:20px;color:#1b2a3e;">Home Improvement</div>
<div class="a" style="left:1576.5px;top:543.60px;font-size:15.5px;line-height:20px;color:#1b2a3e;">Wedding</div>
<div class="a" style="left:1576.5px;top:580.20px;font-size:15.5px;line-height:20px;color:#1b2a3e;">Celebration</div>
<div class="a" style="left:1576.5px;top:616.80px;font-size:15.5px;line-height:20px;color:#1b2a3e;">Elder Care</div>
<div class="a" style="left:1576.5px;top:653.40px;font-size:15.5px;line-height:20px;color:#1b2a3e;">Major Purchase</div>
<div class="a" style="left:1576.5px;top:690.00px;font-size:15.5px;line-height:20px;color:#1b2a3e;">Other</div>
<div class="a" style="left:204px;top:895.00px;font-size:15.6px;line-height:20px;color:#2d5f8f;letter-spacing:0.562px;-webkit-text-stroke:0.44px #2d5f8f;text-underline-offset:2px;"><u>eMoney Advisor, LLC</u></div>
<div class="a" style="left:204px;top:918.10px;font-size:16.1px;line-height:20px;color:#1b2a3e;">Four Radnor Corporate Center,</div>
<div class="a" style="left:204px;top:942.10px;font-size:16.1px;line-height:20px;color:#1b2a3e;">Suite 220</div>
<div class="a" style="left:204px;top:966.10px;font-size:16.1px;line-height:20px;color:#1b2a3e;">100 Matsonford Road</div>
<div class="a" style="left:204px;top:990.10px;font-size:16.1px;line-height:20px;color:#1b2a3e;">Radnor, PA 19087</div>
<svg class="a" style="left:204px;top:1019px" width="14" height="14" viewBox="0 0 14 14"><rect width="14" height="14" rx="2" fill="#000"/><path d="M9.6 14V8.9h1.7l.3-2H9.6V5.7c0-.6.2-1 1-1h1V2.9c-.2 0-.8-.1-1.5-.1c-1.5 0-2.5.9-2.5 2.6v1.5H6v2h1.6V14z" fill="#e9ecf1"/></svg>
<svg class="a" style="left:231px;top:1019px" width="14" height="14" viewBox="0 0 14 14"><rect width="14" height="14" rx="2" fill="#000"/><path d="M3 3h2.6l2 2.8L10 3h1l-2.9 3.3L11.3 11H8.7L6.6 8L3.9 11h-1l3.2-3.6z" fill="#e9ecf1"/><path d="M4.3 3.6h1l5 6.8h-1z" fill="#000"/></svg>
<svg class="a" style="left:257px;top:1019px" width="14" height="14" viewBox="0 0 14 14"><rect width="14" height="14" rx="2" fill="#000"/><rect x="2.6" y="5.4" width="2" height="6" fill="#e9ecf1"/><circle cx="3.6" cy="3.5" r="1.15" fill="#e9ecf1"/><path d="M6 5.4h1.9v.9c.3-.6 1-1 1.9-1c1.6 0 2 1 2 2.5v3.6H9.8V8.2c0-.8-.1-1.4-.9-1.4s-1 .6-1 1.4v3.2H6z" fill="#e9ecf1"/></svg>
<svg class="a" style="left:284px;top:1019px" width="14" height="14" viewBox="0 0 14 14"><rect width="14" height="14" rx="2.5" fill="#000"/><rect x="2.2" y="3.4" width="9.6" height="7.2" rx="1.2" fill="#e9ecf1"/><path d="M5.8 5.2v3.6L9 7z" fill="#000"/></svg>
<div class="a" style="left:582px;top:890.00px;font-size:24.5px;line-height:30px;color:#1b2a3e;font-weight:700;font-family:'Liberation Serif', serif;letter-spacing:-0.1px;">Services</div>
<div class="a" style="left:582px;top:934.30px;font-size:16.2px;line-height:21px;color:#2d5f8f;">eMoney Blog</div>
<div class="a" style="left:582px;top:958.30px;font-size:16.2px;line-height:21px;color:#2d5f8f;">Data Migration Services</div>
<div class="a" style="left:959px;top:889.90px;font-size:24.5px;line-height:30px;color:#1b2a3e;font-weight:700;font-family:'Liberation Serif', serif;letter-spacing:-0.1px;">Support</div>
<div class="a" style="left:959px;top:933.70px;font-size:16.3px;line-height:21px;color:#2d5f8f;">Frequently Asked Questions</div>
<div class="a" style="left:959px;top:957.70px;font-size:16.3px;line-height:21px;color:#2d5f8f;">Request a Feature</div>
<div class="a" style="left:959px;top:981.70px;font-size:16.3px;line-height:21px;color:#2d5f8f;">Request a New Connection</div>
<div class="a" style="left:959px;top:1005.70px;font-size:16.3px;line-height:21px;color:#2d5f8f;letter-spacing:0.787px;-webkit-text-stroke:0.46px #2d5f8f;">(888) 362-8482</div>
<div class="a" style="left:959px;top:1029.70px;font-size:16.3px;line-height:21px;color:#2d5f8f;">Email Support</div>
<div class="a" style="left:737px;top:1072.20px;font-size:14px;line-height:18px;color:#454f5c;letter-spacing:0.18px;">© 2026 eMoney Advisor, LLC.</div>
<div class="a" style="left:937px;top:1071px;width:2px;height:19px;background:#454f5c"></div>
<div class="a" style="left:950px;top:1072.20px;font-size:14px;line-height:18px;color:#454f5c;letter-spacing:-0.32px;">Software Version: 10.3.1041.11238</div>
<div class="a" style="left:781px;top:1096.50px;font-size:14px;line-height:18px;color:#2d5f8f;text-underline-offset:2px;"><u>Terms of Use</u><b class="d">·</b><u>Security</u><b class="d">·</b><u>Privacy Notice</u><b class="d">·</b><u>Disclaimer</u></div>
<div class="a" style="left:1620px;top:1100px;width:113px;height:38px;border:1px solid #cdd4df;border-radius:7px;background:#fbfbfc"></div>
<div class="a" style="left:1635px;top:1111.00px;font-size:14px;line-height:18px;color:#4a5563;letter-spacing:0.204px;-webkit-text-stroke:0.39px #4a5563;">Switch Client</div>
<div class="a" style="left:1745px;top:1100px;width:131px;height:38px;border:1px solid #cdd4df;border-radius:7px;background:#fbfbfc"></div>
<div class="a" style="left:1760px;top:1111.00px;font-size:14px;line-height:18px;color:#4a5563;letter-spacing:0.204px;-webkit-text-stroke:0.39px #4a5563;">Start Presenting</div>
</body></html>
